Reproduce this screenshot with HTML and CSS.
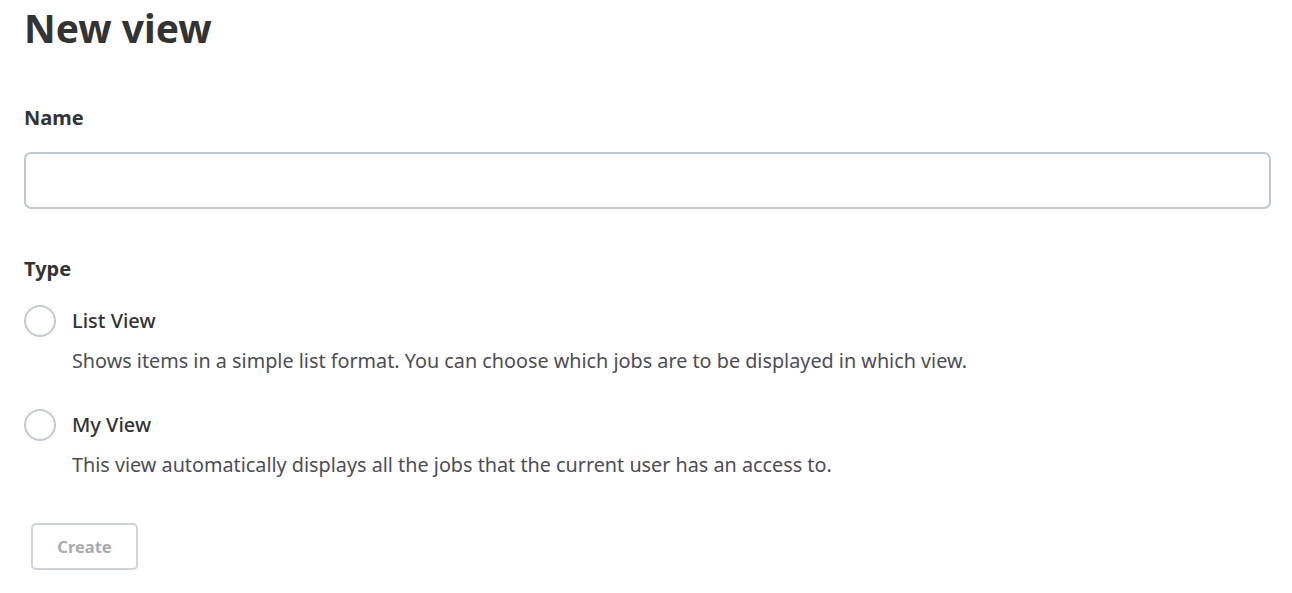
FILE: index.html
```html
<!DOCTYPE html>
<html>
<head>
<meta charset="utf-8">
<link rel="stylesheet" href="styles.css">
</head>
<body>
<main class="page">
  <h1 class="title">New view</h1>
  <form class="form">
    <div class="field">
      <label class="label" for="name">Name</label>
      <input class="input" id="name" type="text">
    </div>
    <div class="field">
      <div class="label type-label">Type</div>
      <div class="options">
        <label class="option">
          <span class="radio"></span>
          <span class="option-body">
            <span class="option-title">List View</span>
            <span class="option-desc">Shows items in a simple list format. You can choose which jobs are to be displayed in which view.</span>
          </span>
        </label>
        <label class="option">
          <span class="radio"></span>
          <span class="option-body">
            <span class="option-title">My View</span>
            <span class="option-desc">This view automatically displays all the jobs that the current user has an access to.</span>
          </span>
        </label>
      </div>
    </div>
    <div class="actions">
      <button class="button" type="button" disabled>Create</button>
    </div>
  </form>
</main>
</body>
</html>
```
FILE: styles.css
```css
html, body {
  margin: 0;
  padding: 0;
  background: #ffffff;
}
body {
  font-family: "Noto Sans", "Open Sans", sans-serif;
  color: #333333;
}
.page {
  padding: 0 21px 0 24px;
}
.title {
  margin: 0;
  padding-top: 4px;
  font-size: 39px;
  font-weight: 700;
  line-height: 48px;
  color: #333333;
}
.form {
  display: flex;
  flex-direction: column;
  margin-top: 53px;
}
.field {
  display: flex;
  flex-direction: column;
}
.field + .field {
  margin-top: 47px;
}
.label {
  font-size: 20px;
  font-weight: 700;
  line-height: 26px;
  margin-bottom: 21px;
  color: #333333;
}
.type-label {
  margin-bottom: 23px;
}
.input {
  box-sizing: border-box;
  height: 57px;
  width: 100%;
  border: 2px solid #bfc8ce;
  border-radius: 7px;
  background: #fff;
  font: inherit;
  padding: 0 14px;
}
.options {
  display: flex;
  flex-direction: column;
  gap: 34px;
}
.option {
  display: flex;
  gap: 16px;
}
.radio {
  box-sizing: border-box;
  flex: none;
  width: 32px;
  height: 32px;
  border: 2px solid #c2cad0;
  border-radius: 50%;
}
.option-body {
  display: flex;
  flex-direction: column;
  gap: 10px;
}
.option-title {
  font-size: 20px;
  font-weight: 500;
  line-height: 32px;
  color: #333333;
}
.option-desc {
  font-size: 19.8px;
  line-height: 28px;
  color: #4d4d55;
}
.actions {
  margin-top: 44px;
  padding-left: 7px;
}
.button {
  box-sizing: border-box;
  width: 107px;
  height: 47px;
  border: 2px solid #cdd3d7;
  border-radius: 5px;
  background: #fff;
  font-family: inherit;
  font-size: 16.5px;
  font-weight: 700;
  color: #a7abae;
}
```
